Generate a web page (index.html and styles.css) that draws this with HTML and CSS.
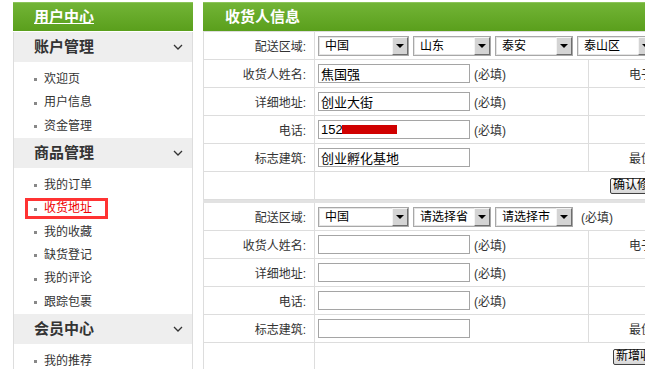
FILE: index.html
```html
<!DOCTYPE html>
<html lang="zh-CN">
<head>
    <meta charset="UTF-8">
    <meta name="viewport" content="width=device-width, initial-scale=1.0">
    <title>收货地址</title>
    <link rel="stylesheet" href="styles.css">
</head>
<body>
<div class="page">
    <!-- 左侧菜单 -->
    <div class="sidebar">
        <div class="side-title"><a href="#">用户中心</a></div>
        <div class="side-body">
            <div class="menu-head">账户管理<svg width="10" height="6" viewBox="0 0 10 6"><polyline points="1,1 5,5 9,1" fill="none" stroke="#333" stroke-width="1.3"/></svg></div>
            <ul class="menu">
                <li>欢迎页</li>
                <li>用户信息</li>
                <li>资金管理</li>
            </ul>
            <div class="menu-head">商品管理<svg width="10" height="6" viewBox="0 0 10 6"><polyline points="1,1 5,5 9,1" fill="none" stroke="#333" stroke-width="1.3"/></svg></div>
            <ul class="menu">
                <li>我的订单</li>
                <li class="active">收货地址</li>
                <li>我的收藏</li>
                <li>缺货登记</li>
                <li>我的评论</li>
                <li>跟踪包裹</li>
            </ul>
            <div class="menu-head">会员中心<svg width="10" height="6" viewBox="0 0 10 6"><polyline points="1,1 5,5 9,1" fill="none" stroke="#333" stroke-width="1.3"/></svg></div>
            <ul class="menu">
                <li>我的推荐</li>
            </ul>
        </div>
    </div>

    <!-- 收货人信息 -->
    <div class="main">
        <div class="main-title">收货人信息</div>

        <table class="addr">
            <colgroup><col class="c1"><col class="c2"><col></colgroup>
            <tr>
                <td class="label">配送区域:</td>
                <td colspan="2"><span class="sel sel-wide"><span class="sel-text">中国</span><span class="sel-btn"></span></span><span class="sel"><span class="sel-text">山东</span><span class="sel-btn"></span></span><span class="sel"><span class="sel-text">泰安</span><span class="sel-btn"></span></span><span class="sel"><span class="sel-text">泰山区</span><span class="sel-btn"></span></span></td>
            </tr>
            <tr>
                <td class="label">收货人姓名:</td>
                <td><input class="txt" type="text" value="焦国强"><span class="req">(必填)</span></td>
                <td class="extra">电子邮件:</td>
            </tr>
            <tr>
                <td class="label">详细地址:</td>
                <td><input class="txt" type="text" value="创业大街"><span class="req">(必填)</span></td>
                <td></td>
            </tr>
            <tr>
                <td class="label">电话:</td>
                <td><span class="mask-wrap"><input class="txt" type="text" value="152"><span class="redact"></span></span><span class="req">(必填)</span></td>
                <td></td>
            </tr>
            <tr>
                <td class="label">标志建筑:</td>
                <td><input class="txt" type="text" value="创业孵化基地"></td>
                <td class="extra">最佳送货时间:</td>
            </tr>
            <tr>
                <td></td>
                <td colspan="2" class="btn-cell"><button class="btn">确认修改</button></td>
            </tr>
        </table>

        <table class="addr addr-new">
            <colgroup><col class="c1"><col class="c2"><col></colgroup>
            <tr>
                <td class="label">配送区域:</td>
                <td colspan="2"><span class="sel sel-wide"><span class="sel-text">中国</span><span class="sel-btn"></span></span><span class="sel"><span class="sel-text">请选择省</span><span class="sel-btn"></span></span><span class="sel"><span class="sel-text">请选择市</span><span class="sel-btn"></span></span><span class="req">(必填)</span></td>
            </tr>
            <tr>
                <td class="label">收货人姓名:</td>
                <td><input class="txt" type="text"><span class="req">(必填)</span></td>
                <td class="extra">电子邮件:</td>
            </tr>
            <tr>
                <td class="label">详细地址:</td>
                <td><input class="txt" type="text"><span class="req">(必填)</span></td>
                <td></td>
            </tr>
            <tr>
                <td class="label">电话:</td>
                <td><input class="txt" type="text"><span class="req">(必填)</span></td>
                <td></td>
            </tr>
            <tr>
                <td class="label">标志建筑:</td>
                <td><input class="txt" type="text"></td>
                <td class="extra">最佳送货时间:</td>
            </tr>
            <tr>
                <td></td>
                <td colspan="2" class="btn-cell btn-cell-new"><button class="btn">新增收货地址</button></td>
            </tr>
        </table>
    </div>
</div>
</body>
</html>
```

FILE: styles.css
```css
html, body {
    overflow: hidden;
}

body {
    margin: 0;
    padding: 2px 0 0 13px;
    font-family: "Liberation Sans", "Noto Sans CJK SC", sans-serif;
    font-size: 12px;
    color: #333;
    background-color: #fff;
}

.page {
    display: flex;
    gap: 10px;
    width: 760px;
}

/* 左侧菜单 */
.sidebar {
    width: 180px;
    flex: none;
}

.side-title,
.main-title {
    height: 28px;
    line-height: 27px;
    border-top: 1px solid #8cc45a;
    background: linear-gradient(#72b436, #5a9f1c);
    color: #fff;
    font-size: 15px;
    font-weight: bold;
}

.side-title {
    padding-left: 21px;
    margin-bottom: 1px;
}

.side-title a {
    color: #fff;
    text-decoration: underline;
}

.side-body {
    border-left: 1px solid #ddd;
    border-right: 1px solid #ddd;
    min-height: 400px;
}

.menu-head {
    box-sizing: border-box;
    height: 30px;
    display: flex;
    justify-content: space-between;
    align-items: center;
    padding: 0 9px 3px 20px;
    background-color: #eee;
    font-size: 15px;
    font-weight: bold;
    color: #333;
}

.menu-head svg {
    margin-top: 3px;
}

.menu {
    list-style: none;
    margin: 0;
    padding: 6px 0 0;
}

.menu li {
    position: relative;
    height: 23.33px;
    line-height: 23.33px;
    padding-left: 20px;
    color: #333;
}

.menu li::before {
    content: "";
    display: inline-block;
    width: 3px;
    height: 3px;
    background-color: #888;
    margin-right: 7px;
    vertical-align: middle;
}

.menu li.active {
    color: #e00;
}

/* 红框标注 */
.menu li.active::after {
    content: "";
    position: absolute;
    left: 11px;
    top: 1px;
    width: 83px;
    height: 21px;
    border: 3px solid #f33;
    box-sizing: border-box;
}

/* 右侧表单 */
.main {
    width: 560px;
    flex: none;
}

.main-title {
    padding-left: 22px;
}

.addr {
    width: 100%;
    border-collapse: collapse;
    table-layout: fixed;
}

.addr .c1 {
    width: 111px;
}

.addr .c2 {
    width: 274px;
}

.addr td {
    height: 27px;
    padding: 0 0 0 3px;
    border: 1px solid #ddd;
    vertical-align: middle;
    white-space: nowrap;
}

.addr-new {
    border-top: 3px solid #e2e2e2;
}

.addr td.label {
    text-align: right;
    padding: 0 8px 0 0;
}

.addr td.extra {
    padding-left: 40px;
}

.sel {
    display: inline-flex;
    align-items: center;
    box-sizing: border-box;
    width: 78px;
    height: 20px;
    margin-right: 4px;
    border: 1px solid #a8a8a8;
    box-shadow: inset 0 0 0 1px #e4e4e4;
    background-color: #fff;
    vertical-align: middle;
}

.sel-wide {
    width: 91px;
}

.sel-text {
    flex: 1;
    padding-left: 6px;
    color: #000;
    font-size: 12px;
    line-height: 18px;
}

.sel-btn {
    position: relative;
    box-sizing: border-box;
    width: 16px;
    height: 18px;
    background-color: #d4d4d4;
    border: 1px solid;
    border-color: #f4f4f4 #6e6e6e #6e6e6e #f4f4f4;
}

.sel-btn::after {
    content: "";
    position: absolute;
    left: 3px;
    top: 6px;
    border-left: 4px solid transparent;
    border-right: 4px solid transparent;
    border-top: 4px solid #000;
}

.txt {
    box-sizing: border-box;
    width: 152px;
    height: 19px;
    margin: 0;
    padding: 0 2px;
    border: 1px solid #a5a5a5;
    font-family: "Liberation Sans", "Noto Sans CJK SC", sans-serif;
    font-size: 13px;
    color: #000;
    vertical-align: middle;
}

.mask-wrap {
    position: relative;
    display: inline-block;
    vertical-align: middle;
}

.mask-wrap .txt {
    display: block;
}

.redact {
    position: absolute;
    left: 24px;
    top: 5px;
    width: 55px;
    height: 9px;
    background-color: #d00000;
}

.req {
    margin-left: 4px;
    vertical-align: middle;
}

.btn-cell {
    padding-left: 295px !important;
}

.btn-cell-new {
    padding-left: 298px !important;
}

.btn {
    height: 16px;
    line-height: 13px;
    padding: 0 2px;
    border: 1px solid #404040;
    border-radius: 2px;
    background: linear-gradient(#ffffff, #d6d6d6);
    color: #000;
    font-family: "Liberation Sans", "Noto Sans CJK SC", sans-serif;
    font-size: 12px;
    vertical-align: middle;
}
```
